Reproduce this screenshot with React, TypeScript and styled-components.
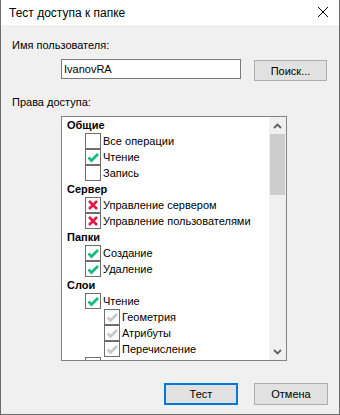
import React from "react";
import styled, { createGlobalStyle } from "styled-components";

type Mark = "none" | "checked" | "denied" | "inherited";

interface Row {
  label: string;
  level: number;
  header?: boolean;
  mark?: Mark;
}

// the last row is scrolled off: only the top edge of its box shows
const rows: Row[] = [
  { label: "Общие", level: 0, header: true },
  { label: "Все операции", level: 1, mark: "none" },
  { label: "Чтение", level: 1, mark: "checked" },
  { label: "Запись", level: 1, mark: "none" },
  { label: "Сервер", level: 0, header: true },
  { label: "Управление сервером", level: 1, mark: "denied" },
  { label: "Управление пользователями", level: 1, mark: "denied" },
  { label: "Папки", level: 0, header: true },
  { label: "Создание", level: 1, mark: "checked" },
  { label: "Удаление", level: 1, mark: "checked" },
  { label: "Слои", level: 0, header: true },
  { label: "Чтение", level: 1, mark: "checked" },
  { label: "Геометрия", level: 2, mark: "inherited" },
  { label: "Атрибуты", level: 2, mark: "inherited" },
  { label: "Перечисление", level: 2, mark: "inherited" },
  { label: "", level: 1, mark: "none" },
];

const GlobalStyle = createGlobalStyle`
  html, body {
    margin: 0;
    padding: 0;
    background: #ffffff;
  }
  body {
    font-family: "Liberation Sans", Arial, sans-serif;
    font-size: 11px;
    color: #000000;
  }
`;

const Window = styled.div`
  width: 340px;
  height: 415px;
  box-sizing: border-box;
  border: 1px solid #6b6b6b;
  border-top: none;
  display: flex;
  flex-direction: column;
  background: #f0f0f0;
`;

const TitleBar = styled.div`
  height: 25px;
  flex: none;
  background: #ffffff;
  display: flex;
  align-items: center;
  padding-left: 8px;
  padding-top: 1px;
  box-sizing: border-box;
  font-size: 12px;
`;

const TitleText = styled.span`
  flex: 1;
`;

const CloseButton = styled.span`
  width: 10px;
  height: 10px;
  margin-right: 11px;
  margin-top: -3px;
  display: flex;
`;

const Body = styled.div`
  flex: 1;
  padding: 14px 11px 0 11px;
  display: flex;
  flex-direction: column;
`;

const Label = styled.div`
  line-height: 13px;
  height: 13px;
`;

const SearchRow = styled.div`
  display: flex;
  align-items: flex-start;
  margin-top: 7px;
  padding-left: 49px;
`;

const TextInput = styled.div`
  width: 180px;
  height: 20px;
  box-sizing: border-box;
  border: 1px solid #7a7a7a;
  background: #ffffff;
  padding-left: 2px;
  line-height: 18px;
`;

const Button = styled.div<{ $primary?: boolean; $w: number; $h: number }>`
  width: ${({ $w }) => $w}px;
  height: ${({ $h }) => $h}px;
  box-sizing: border-box;
  background: #e1e1e1;
  border: ${({ $primary }) => ($primary ? "2px solid #0078d7" : "1px solid #adadad")};
  display: flex;
  align-items: center;
  justify-content: center;
`;

const SearchButton = styled(Button)`
  margin-left: 13px;
  margin-top: 1px;
`;

const RightsLabel = styled(Label)`
  margin-top: 15px;
`;

const ListBox = styled.div`
  margin-top: 7px;
  margin-left: 49px;
  width: 226px;
  height: 245px;
  box-sizing: border-box;
  border: 1px solid #828282;
  background: #ffffff;
  display: flex;
  overflow: hidden;
`;

const ListContent = styled.div`
  flex: 1;
  overflow: hidden;
`;

const ItemRow = styled.div<{ $level: number }>`
  height: 16px;
  display: flex;
  align-items: center;
  padding-left: ${({ $level }) => ($level === 0 ? 5 : 4 + $level * 19)}px;
  white-space: nowrap;
`;

const HeaderText = styled.span`
  font-weight: bold;
`;

const Box = styled.span`
  width: 16px;
  height: 16px;
  box-sizing: border-box;
  border: 1px solid #6e6e6e;
  background: #ffffff;
  margin-right: 2px;
  flex: none;
  display: flex;
  align-items: center;
  justify-content: center;
`;

const ScrollBar = styled.div`
  width: 17px;
  flex: none;
  background: #f0f0f0;
  display: flex;
  flex-direction: column;
`;

const ArrowCell = styled.div`
  height: 17px;
  flex: none;
  display: flex;
  align-items: center;
  justify-content: center;
`;

const Track = styled.div`
  flex: 1;
  padding: 0 1px;
`;

const Thumb = styled.div`
  height: 61px;
  background: #cdcdcd;
`;

const Footer = styled.div`
  display: flex;
  justify-content: flex-end;
  gap: 16px;
  margin-top: 22px;
`;

const CheckMark = ({ mark }: { mark: Mark }) => {
  if (mark === "none") return null;
  if (mark === "denied") {
    return (
      <svg width="14" height="14" viewBox="0 0 14 14">
        <path d="M3 3 L11 11 M11 3 L3 11" stroke="#e8174b" strokeWidth="2.6" fill="none" />
      </svg>
    );
  }
  const color = mark === "checked" ? "#19b882" : "#c9c9c9";
  return (
    <svg width="14" height="14" viewBox="0 0 14 14">
      <path d="M2.5 7.5 L5.5 10.5 L12 4" stroke={color} strokeWidth="2.8" fill="none" />
    </svg>
  );
};

const Chevron = ({ up }: { up?: boolean }) => (
  <svg width="9" height="6" viewBox="0 0 9 6">
    <path
      d={up ? "M1 5 L4.5 1.5 L8 5" : "M1 1 L4.5 4.5 L8 1"}
      stroke="#606060"
      strokeWidth="1.8"
      fill="none"
    />
  </svg>
);

export default function App() {
  return (
    <>
      <GlobalStyle />
      <Window>
        <TitleBar>
          <TitleText>Тест доступа к папке</TitleText>
          <CloseButton>
            <svg width="10" height="10" viewBox="0 0 10 10">
              <path d="M0 0 L10 10 M10 0 L0 10" stroke="#000" strokeWidth="1" fill="none" />
            </svg>
          </CloseButton>
        </TitleBar>
        <Body>
          <Label>Имя пользователя:</Label>
          <SearchRow>
            <TextInput>IvanovRA</TextInput>
            <SearchButton $w={73} $h={21}>Поиск...</SearchButton>
          </SearchRow>
          <RightsLabel>Права доступа:</RightsLabel>
          <ListBox>
            <ListContent>
              {rows.map((r, i) => (
                <ItemRow key={i} $level={r.level}>
                  {r.header ? (
                    <HeaderText>{r.label}</HeaderText>
                  ) : (
                    <>
                      <Box>
                        <CheckMark mark={r.mark ?? "none"} />
                      </Box>
                      {r.label && <span>{r.label}</span>}
                    </>
                  )}
                </ItemRow>
              ))}
            </ListContent>
            <ScrollBar>
              <ArrowCell>
                <Chevron up />
              </ArrowCell>
              <Track>
                <Thumb />
              </Track>
              <ArrowCell>
                <Chevron />
              </ArrowCell>
            </ScrollBar>
          </ListBox>
          <Footer>
            <Button $primary $w={74} $h={22}>Тест</Button>
            <Button $w={74} $h={22}>Отмена</Button>
          </Footer>
        </Body>
      </Window>
    </>
  );
}
